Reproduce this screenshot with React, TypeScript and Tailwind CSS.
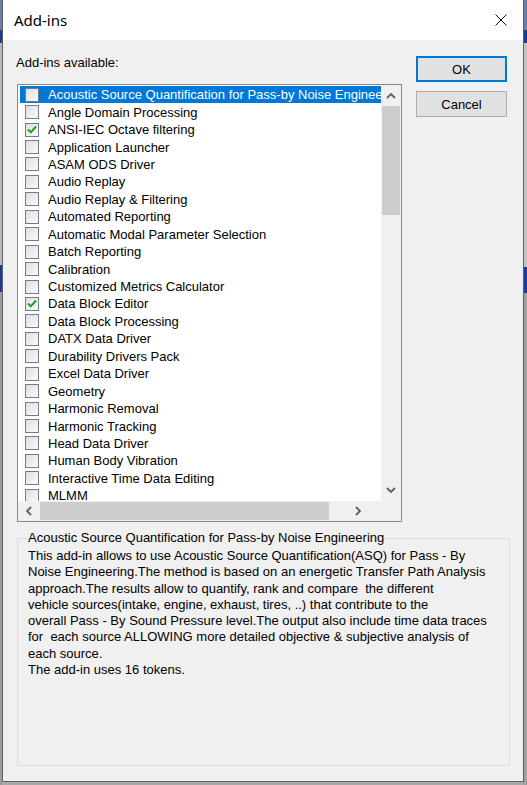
import React from 'react';

const addins: { name: string; checked?: boolean }[] = [
  { name: 'Acoustic Source Quantification for Pass-by Noise Engineering' },
  { name: 'Angle Domain Processing' },
  { name: 'ANSI-IEC Octave filtering', checked: true },
  { name: 'Application Launcher' },
  { name: 'ASAM ODS Driver' },
  { name: 'Audio Replay' },
  { name: 'Audio Replay & Filtering' },
  { name: 'Automated Reporting' },
  { name: 'Automatic Modal Parameter Selection' },
  { name: 'Batch Reporting' },
  { name: 'Calibration' },
  { name: 'Customized Metrics Calculator' },
  { name: 'Data Block Editor', checked: true },
  { name: 'Data Block Processing' },
  { name: 'DATX Data Driver' },
  { name: 'Durability Drivers Pack' },
  { name: 'Excel Data Driver' },
  { name: 'Geometry' },
  { name: 'Harmonic Removal' },
  { name: 'Harmonic Tracking' },
  { name: 'Head Data Driver' },
  { name: 'Human Body Vibration' },
  { name: 'Interactive Time Data Editing' },
  { name: 'MLMM' },
];

const description = [
  'This add-in allows to use Acoustic Source Quantification(ASQ) for Pass - By',
  'Noise Engineering.The method is based on an energetic Transfer Path Analysis',
  'approach.The results allow to quantify, rank and compare  the different',
  'vehicle sources(intake, engine, exhaust, tires, ..) that contribute to the',
  'overall Pass - By Sound Pressure level.The output also include time data traces',
  'for  each source ALLOWING more detailed objective & subjective analysis of',
  'each source.',
  'The add-in uses 16 tokens.',
];

function CheckBox({ checked }: { checked?: boolean }) {
  return (
    <div className="w-[14px] h-[14px] border border-[#6f7c92] bg-gradient-to-br from-[#dedede] to-[#fbfbfb] flex items-center justify-center shrink-0">
      {checked && (
        <svg width="10" height="9" viewBox="0 0 10 9">
          <path d="M1 4.5 L3.8 7.3 L9 1.5" fill="none" stroke="#1f9e1f" strokeWidth="2" />
        </svg>
      )}
    </div>
  );
}

function Chevron({ dir }: { dir: 'up' | 'down' | 'left' | 'right' }) {
  const d = {
    up: 'M1 6 L5 2 L9 6',
    down: 'M1 2 L5 6 L9 2',
    left: 'M6 1 L2 5 L6 9',
    right: 'M2 1 L6 5 L2 9',
  }[dir];
  const vertical = dir === 'up' || dir === 'down';
  return (
    <svg width={vertical ? 10 : 8} height={vertical ? 8 : 10} viewBox={vertical ? '0 0 10 8' : '0 0 8 10'}>
      <path d={d} fill="none" stroke="#606060" strokeWidth="1.8" />
    </svg>
  );
}

function ListBox() {
  return (
    <div className="w-[385px] h-[438px] border border-[#828790] bg-white flex flex-col">
      <div className="flex flex-1 min-h-0">
        {/* rows */}
        <div className="flex-1 min-w-0 overflow-hidden pl-[2px] pt-[1px]">
          {addins.map((a, i) => (
            <div
              key={a.name}
              className={`h-[17.45px] flex items-center whitespace-nowrap ${i === 0 ? 'bg-[#0078d7] text-white' : 'text-black'}`}
            >
              <div className="pl-[5px] pr-[9px]">
                <CheckBox checked={a.checked} />
              </div>
              <span className="leading-none">{a.name}</span>
            </div>
          ))}
        </div>
        {/* vertical scrollbar */}
        <div className="w-[20px] bg-[#f0f0f0] flex flex-col">
          <div className="h-[21px] flex items-center justify-center">
            <Chevron dir="up" />
          </div>
          <div className="mx-[1px] h-[109px] bg-[#cdcdcd]" />
          <div className="flex-1" />
          <div className="h-[22px] flex items-center justify-center">
            <Chevron dir="down" />
          </div>
        </div>
      </div>
      {/* horizontal scrollbar */}
      <div className="h-[20px] flex shrink-0">
        <div className="flex-1 bg-[#f0f0f0] flex items-center">
          <div className="w-[22px] flex items-center justify-center">
            <Chevron dir="left" />
          </div>
          <div className="w-[289px] h-[18px] bg-[#cdcdcd]" />
          <div className="flex-1 flex items-center justify-center pl-[6px]">
            <Chevron dir="right" />
          </div>
        </div>
        <div className="w-[20px] bg-[#f0f0f0]" />
      </div>
    </div>
  );
}

export default function App() {
  return (
    <div
      className="w-[527px] h-[785px] bg-[#a8a8a8] flex overflow-hidden text-[13px] text-black"
      style={{ fontFamily: '"Liberation Sans", Arial, sans-serif' }}
    >
      {/* desktop behind the dialog, left edge */}
      <div className="w-[2px] flex flex-col shrink-0">
        <div className="h-[30px] bg-[#6a7ea8]" />
        <div className="h-[13px] bg-[#1b3b96]" />
        <div className="h-[222px] bg-[#b9b9b9]" />
        <div className="h-[27px] bg-[#1b3b96]" />
        <div className="flex-1 bg-[#9c9c9c]" />
      </div>

      <div className="w-[522px] h-[782px] flex flex-col shrink-0 border-x border-b border-[#5f5f5f] bg-[#f0f0f0]">
        {/* title bar */}
        <div className="h-[40px] bg-white flex items-center pl-[11px] pr-[16px] shrink-0">
          <span className="text-[15px] text-black" style={{ fontFamily: '"Noto Sans", "Open Sans", sans-serif' }}>
            Add-ins
          </span>
          <svg className="ml-auto" width="12" height="12" viewBox="0 0 12 12">
            <path d="M0.5 0.5 L11.5 11.5 M11.5 0.5 L0.5 11.5" stroke="#111" strokeWidth="1" />
          </svg>
        </div>

        {/* body */}
        <div className="flex-1 flex flex-col pl-[14px] pr-[13px]">
          <div className="flex">
            <div className="flex flex-col">
              <div className="-ml-[1px] mt-[15px] h-[16px] leading-[16px]">Add-ins available:</div>
              <div className="mt-[13px]">
                <ListBox />
              </div>
            </div>
            <div className="ml-auto mr-[3px] mt-[16px] w-[91px] flex flex-col gap-[9px]">
              <button className="h-[26px] bg-[#e1e1e1] border-2 border-[#0078d7] leading-none">OK</button>
              <button className="h-[26px] bg-[#e1e1e1] border border-[#adadad] leading-none">Cancel</button>
            </div>
          </div>

          {/* description group */}
          <fieldset className="mt-[8px] w-[493px] h-[236px] border border-[#dcdcdc] px-[10px]">
            <legend className="px-0 h-[16px] leading-[16px]">
              Acoustic Source Quantification for Pass-by Noise Engineering
            </legend>
            <div className="pt-[2px]">
              {description.map((line, i) => (
                <div key={i} className="h-[16.3px] leading-[16.3px] whitespace-pre">
                  {line}
                </div>
              ))}
            </div>
          </fieldset>
        </div>
      </div>

      {/* desktop behind the dialog, right edge */}
      <div className="w-[3px] flex flex-col shrink-0">
        <div className="h-[30px] bg-[#6a7ea8]" />
        <div className="h-[13px] bg-[#1b3b96]" />
        <div className="h-[224px] bg-[#c4c4c4]" />
        <div className="h-[26px] bg-[#1b3b96]" />
        <div className="flex-1 bg-[#a0a0a0]" />
      </div>
    </div>
  );
}
